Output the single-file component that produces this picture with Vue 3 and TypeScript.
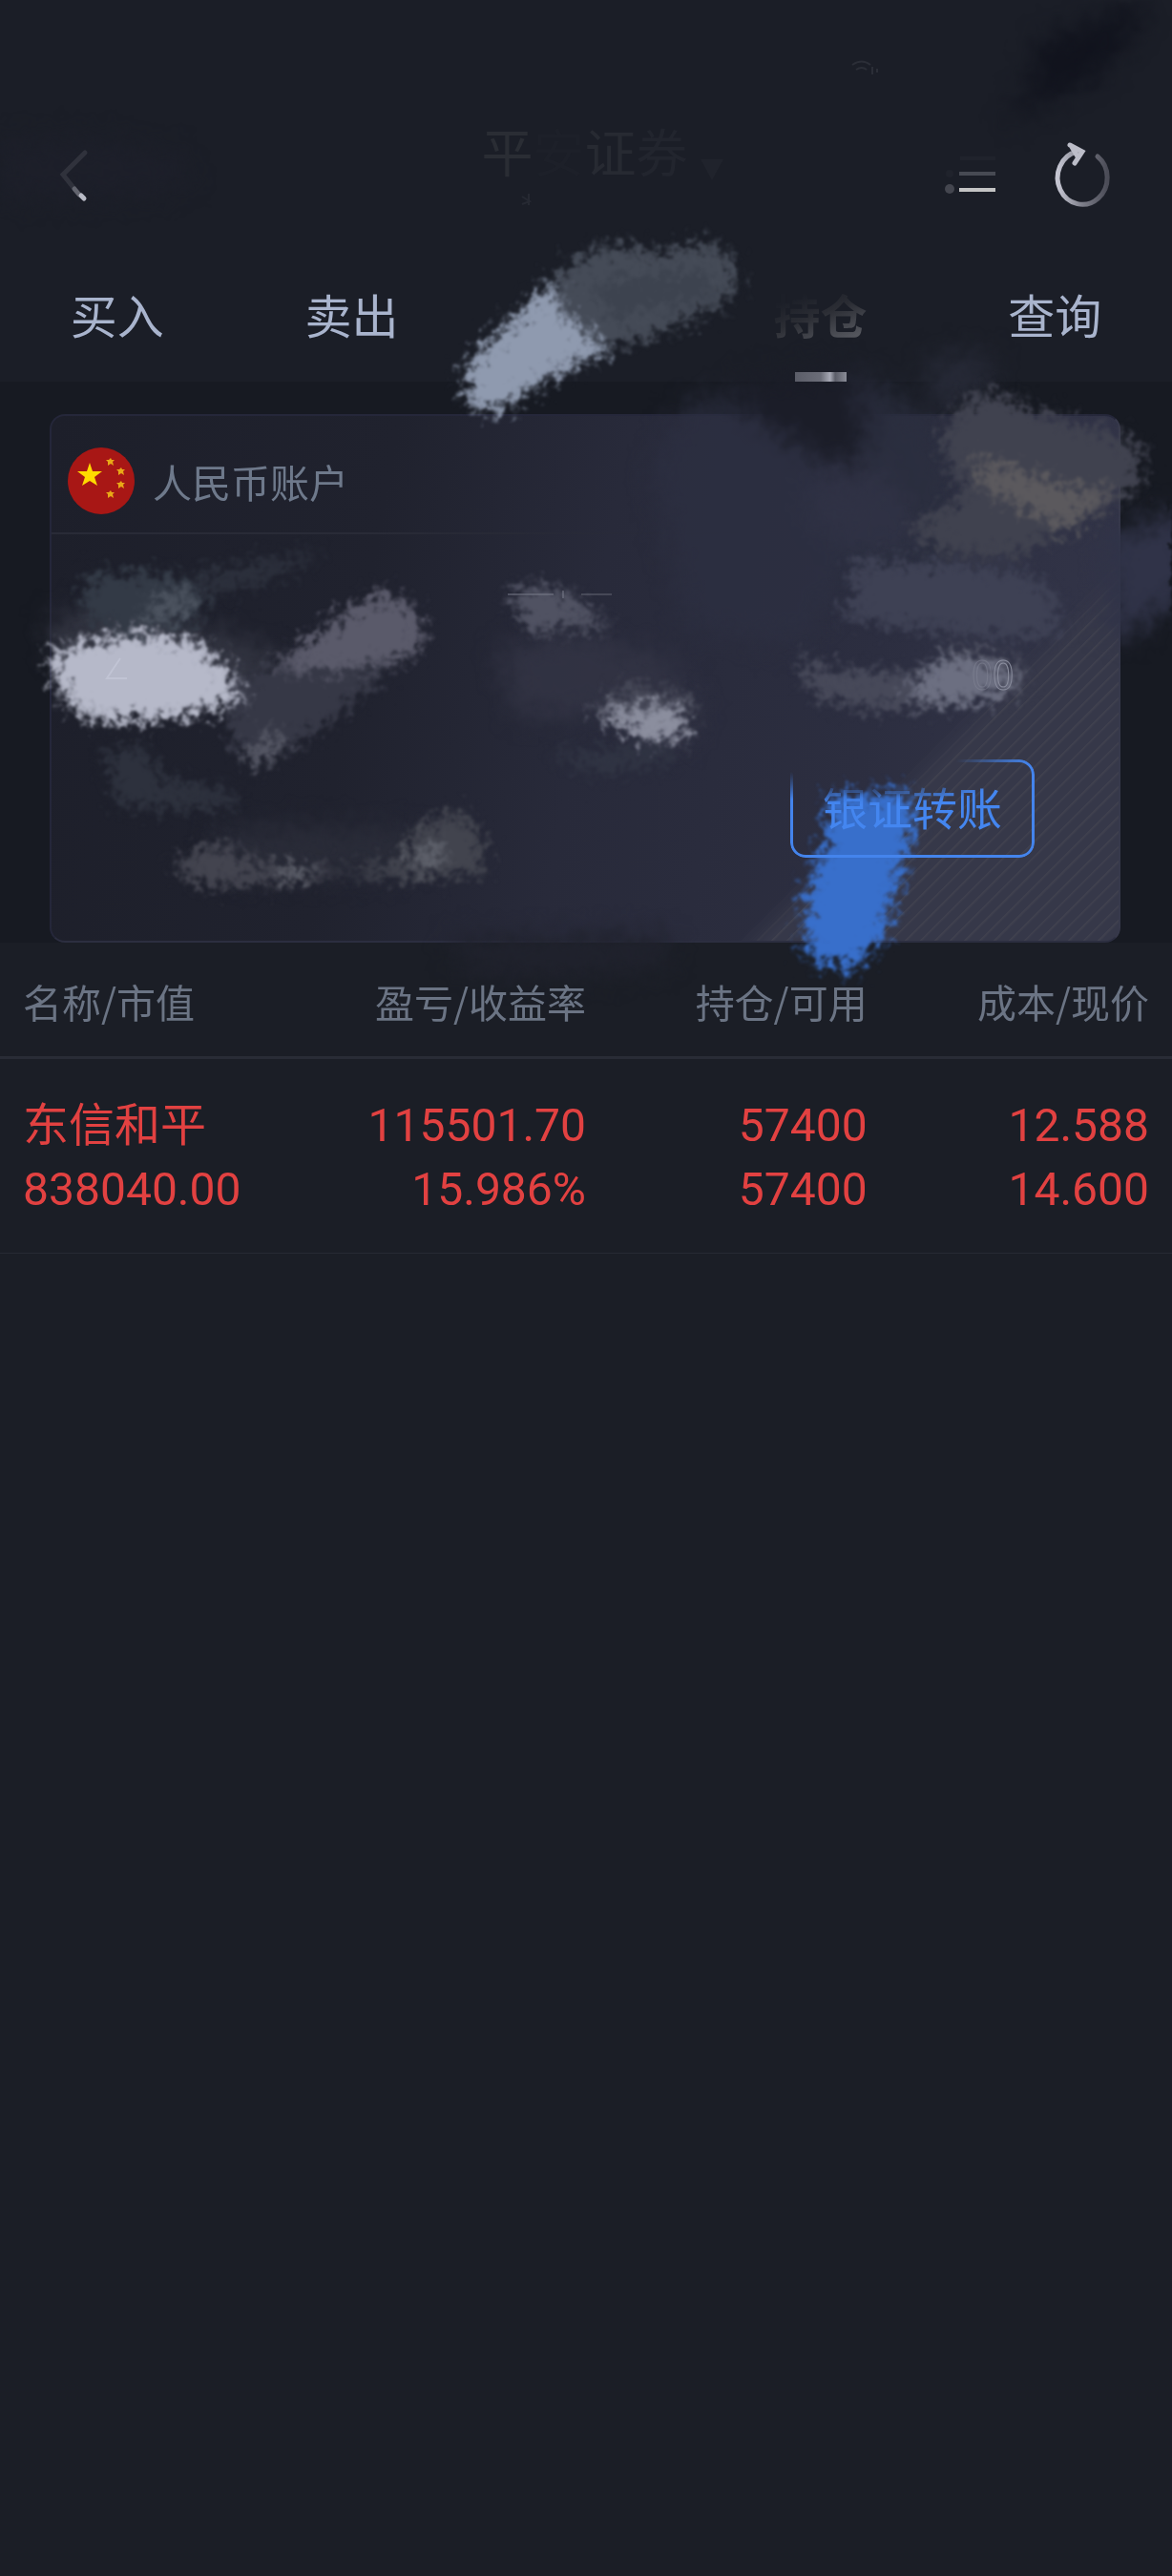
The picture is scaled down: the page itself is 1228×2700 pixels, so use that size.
<script setup lang="ts">
interface Smear {
  d: string
  fill: string
  opacity?: number
}

interface Holding {
  name: string
  value: string
  profit: string
  rate: string
  held: string
  available: string
  cost: string
  price: string
}

const columns: string[] = ['名称/市值', '盈亏/收益率', '持仓/可用', '成本/现价']

const holdings: Holding[] = [
  {
    name: '东信和平',
    value: '838040.00',
    profit: '115501.70',
    rate: '15.986%',
    held: '57400',
    available: '57400',
    cost: '12.588',
    price: '14.600',
  },
]

// wide, cloudy strokes
const softSmears: Smear[] = [
  { d: 'M1090 40L1130 30L1190 0L1200 20L1150 80L1100 105L1050 130L1080 90Z', fill: '#10121c', opacity: 0.9 },
  { d: 'M0 150L110 146L190 165L200 190L150 205L0 208Z', fill: '#1e202b', opacity: 0.6 },
  { d: 'M680 490L715 425L760 412L800 435L860 480L900 580L840 680L720 660Z', fill: '#2d3042', opacity: 0.65 },
  { d: 'M770 400L890 385L925 410L916 470L884 490L840 470L785 432Z', fill: '#1b1d28' },
  { d: 'M890 390L920 400L975 440L1000 500L1000 600L880 600L905 450Z', fill: '#2b2e3f', opacity: 0.8 },
  { d: 'M975 375L1040 372L1035 410L1010 420L985 440L970 410Z', fill: '#262936' },
  { d: 'M850 500L920 490L950 530L970 570L900 580L850 550Z', fill: '#33364a', opacity: 0.5 },
  { d: 'M1160 562L1250 530L1250 615L1180 668L1160 665Z', fill: '#303348' },
  { d: 'M520 680L600 660L700 690L735 740L720 780L640 750L540 750Z', fill: '#333545', opacity: 0.8 },
  { d: 'M470 985L700 980L700 1012L600 1022L490 1020Z', fill: '#20222d' },
  { d: 'M50 650L90 640L230 662L300 690L255 735L60 690Z', fill: '#343642', opacity: 0.9 },
  { d: 'M220 870L300 865L440 870L430 915L250 920Z', fill: '#2a2c38', opacity: 0.9 },
]

// dry-brush strokes with frayed edges
const roughSmears: Smear[] = [
  { d: 'M575 298L612 266L645 256L690 266L740 253L768 272L772 302L745 325L690 350L620 368Z', fill: '#454b57' },
  { d: 'M620 296L740 280L750 310L640 335Z', fill: '#3d434f' },
  { d: 'M486 385L530 340L578 295L594 332L640 366L600 384L570 400L520 434L490 424Z', fill: '#8f9aaf' },
  { d: 'M1000 430L1035 408L1080 428L1150 450L1195 464L1194 508L1130 552L1060 585L990 580L950 555L1010 520L985 465Z', fill: '#40424f' },
  { d: 'M1018 480L1060 491L1130 513L1172 512L1115 555L1088 540L1030 512Z', fill: '#5b595d' },
  { d: 'M890 588L1000 590L1070 598L1108 623L1110 664L1060 670L960 660L878 647L895 620Z', fill: '#3e4154' },
  { d: 'M838 685L870 702L960 706L1000 678L1066 688L1074 724L1000 741L900 743L845 724Z', fill: '#474959' },
  { d: 'M955 718L985 690L1030 692L1066 706L1054 728L1000 738L950 733Z', fill: '#6c6f81' },
  { d: 'M90 602L180 600L220 620L205 653L130 663L88 648Z', fill: '#333a46' },
  { d: 'M200 602L270 588L340 579L300 600L230 624Z', fill: '#2c303c' },
  { d: 'M152 638L175 620L208 622L188 648L146 650Z', fill: '#4c535f' },
  { d: 'M245 708L330 696L412 698L345 758L270 804L240 778Z', fill: '#363846' },
  { d: 'M282 702L350 650L395 620L430 632L446 665L432 688L370 702Z', fill: '#5a5a6a' },
  { d: 'M255 792L280 768L302 774L272 805Z', fill: '#565865' },
  { d: 'M56 682L100 670L140 664L205 671L236 698L256 732L200 751L112 757L78 746L56 712Z', fill: '#b6b9c9' },
  { d: 'M108 790L150 780L170 815L250 830L240 847L125 847Z', fill: '#2d313d' },
  { d: 'M180 908L228 880L264 902L330 910L372 914L300 925L210 929Z', fill: '#43444f' },
  { d: 'M360 914L420 900L436 866L484 850L506 878L504 916L420 922Z', fill: '#42444e' },
  { d: 'M290 910L318 905L330 917L300 922ZM425 902L455 884L470 893L440 910Z', fill: '#62656f' },
  { d: 'M575 790L695 782L706 800L620 812Z', fill: '#303443' },
  { d: 'M532 622L560 612L604 626L640 656L555 662Z', fill: '#505262' },
  { d: 'M628 738L660 716L725 730L720 776L680 760Z', fill: '#454756' },
  { d: 'M622 744L660 742L718 740L716 774L685 778L652 766Z', fill: '#8b8e9e' },
  { d: 'M868 836L954 830L956 875L940 930L924 986L892 1018L844 1002L844 940L866 880Z', fill: '#386fcb' },
]
</script>

<template>
  <div class="page">
    <header class="top">
      <div class="titlebar">
        <button class="icon back" type="button" aria-label="返回">
          <svg width="40" height="64" viewBox="0 0 40 64" fill="none" stroke-linecap="round" stroke-width="5">
            <path d="M29 8L6 31L18 46" stroke="#30323c" />
            <path d="M18 46L23 52" stroke="#62646e" />
            <path d="M25 53L28 56" stroke="#b9bbc6" />
          </svg>
        </button>
        <h1 class="title">
          <span class="t1">平</span><span class="t2">安</span><span class="t3">证</span><span class="t4">券</span>
          <svg class="caret" width="26" height="24" viewBox="0 0 26 24"><path d="M1 1H25L13 23Z" fill="#20232c" /></svg>
        </h1>
        <div class="actions">
          <button class="icon" type="button" aria-label="列表">
            <svg width="60" height="64" viewBox="0 0 60 64" fill="none" stroke-width="4">
              <path d="M19 14H56" stroke="#20232c" />
              <path d="M18 30H56" stroke="#474a53" />
              <path d="M18 47H56" stroke="#c4c4c4" />
              <circle cx="8" cy="30" r="4" fill="#20232c" />
              <circle cx="8" cy="46" r="5" fill="#44464f" />
            </svg>
          </button>
          <button class="icon" type="button" aria-label="刷新">
            <svg width="64" height="72" viewBox="0 0 64 72" fill="none" stroke-width="5" stroke-linecap="round">
              <defs>
                <linearGradient id="ring" x1="0" x2="1" y1="0" y2="0">
                  <stop offset="0" stop-color="#c5c6d2" />
                  <stop offset="0.5" stop-color="#7d7e89" />
                  <stop offset="1" stop-color="#4b4c57" />
                </linearGradient>
              </defs>
              <path d="M49 16A26 28 0 1 1 27 11" stroke="url(#ring)" />
              <path d="M20 4L33 11L25 23M22 6L28 16" stroke="#bcbdc8" />
            </svg>
          </button>
        </div>
      </div>
      <nav class="tabs">
        <a class="tab" href="#buy">买入</a>
        <a class="tab" href="#sell">卖出</a>
        <span class="tab"></span>
        <a class="tab active" href="#hold"><span>持仓</span></a>
        <a class="tab" href="#query">查询</a>
      </nav>
    </header>

    <section class="account">
      <div class="card">
        <div class="card-head">
          <svg class="flag" width="72" height="72" viewBox="0 0 72 72" aria-hidden="true">
            <circle cx="36" cy="36" r="35" fill="#a81715" />
            <path d="M24 17L27 26H37L29 32L32 41L24 36L16 41L19 32L11 26H21Z" fill="#ffda00" />
            <g fill="#e8a817">
              <path d="M46 12l1 2 3 0-2 2 1 4-3-2-3 2 0-4-2-2 3 0z" />
              <path d="M57 22l1 2 3 0-2 2 1 4-3-2-3 2 0-4-2-2 3 0z" />
              <path d="M57 36l1 2 3 0-2 2 1 4-3-2-3 2 0-4-2-2 3 0z" />
              <path d="M46 46l1 2 3 0-2 2 1 4-3-2-3 2 0-4-2-2 3 0z" />
            </g>
          </svg>
          <h2 class="account-name">人民币账户</h2>
        </div>
        <div class="card-body">
          <button class="transfer" type="button">银证转账</button>
        </div>
      </div>
    </section>

    <table class="holdings">
      <thead>
        <tr>
          <th v-for="c in columns" :key="c" scope="col">{{ c }}</th>
        </tr>
      </thead>
      <tbody>
        <tr v-for="h in holdings" :key="h.name">
          <td>{{ h.name }}<br />{{ h.value }}</td>
          <td>{{ h.profit }}<br />{{ h.rate }}</td>
          <td>{{ h.held }}<br />{{ h.available }}</td>
          <td>{{ h.cost }}<br />{{ h.price }}</td>
        </tr>
      </tbody>
    </table>

    <svg class="smears" viewBox="0 0 1228 1060" preserveAspectRatio="none" aria-hidden="true">
      <defs>
        <filter id="cloud" x="0" y="0" width="1228" height="1060" filterUnits="userSpaceOnUse" color-interpolation-filters="sRGB">
          <feGaussianBlur stdDeviation="13" result="b" />
          <feTurbulence type="fractalNoise" baseFrequency="0.07" numOctaves="3" seed="4" result="n" />
          <feDisplacementMap in="b" in2="n" scale="26" xChannelSelector="R" yChannelSelector="G" result="d" />
          <feGaussianBlur in="d" stdDeviation="1" />
        </filter>
        <filter id="brush" x="0" y="0" width="1228" height="1060" filterUnits="userSpaceOnUse" color-interpolation-filters="sRGB">
          <feGaussianBlur stdDeviation="6" result="b" />
          <feTurbulence type="fractalNoise" baseFrequency="0.11" numOctaves="3" seed="9" result="n" />
          <feDisplacementMap in="b" in2="n" scale="44" xChannelSelector="R" yChannelSelector="G" result="d" />
          <feGaussianBlur in="d" stdDeviation="1" />
        </filter>
      </defs>
      <g filter="url(#cloud)">
        <path v-for="(s, i) in softSmears" :key="i" :d="s.d" :fill="s.fill" :opacity="s.opacity ?? 1" />
      </g>
      <g filter="url(#brush)">
        <path v-for="(s, i) in roughSmears" :key="i" :d="s.d" :fill="s.fill" :opacity="s.opacity ?? 1" />
      </g>
      <g fill="none" stroke="#2b2e37" stroke-width="2">
        <path d="M893 68Q903 61 912 68M897 73Q903 69 908 73M914 70V78M919 72V76" />
        <path d="M547 206L555 211L547 214M554 203V215" opacity="0.7" />
      </g>
      <path d="M532 623H580M590 619V627" stroke="#7b7e8c" stroke-width="2" opacity="0.5" />
      <path d="M609 623H641" stroke="#5b5e6c" stroke-width="2" opacity="0.6" />
      <path d="M126 690L112 711H133" fill="none" stroke="#c6c9d8" stroke-width="2" opacity="0.7" />
      <text x="1018" y="722" class="ghost dim">0</text>
      <text x="1040" y="722" class="ghost">0</text>
    </svg>
  </div>
</template>

<style>
body {
  margin: 0;
  background: #1b1e26;
}
</style>

<style scoped>
.page {
  position: relative;
  min-height: 100vh;
  background: #1b1e26;
  color: #a9b4cd;
  font-family: "Noto Sans CJK SC", "Noto Sans", sans-serif;
}

.top {
  padding-top: 112px;
  background: #1b1e27;
}

.titlebar {
  display: grid;
  grid-template-columns: 1fr auto 1fr;
  align-items: center;
  height: 144px;
  padding: 0 63px 0 60px;
}

.icon {
  display: block;
  padding: 0;
  border: 0;
  background: none;
  position: relative;
  z-index: 2;
}

.icon svg {
  display: block;
}

.title {
  display: flex;
  align-items: center;
  margin: 0;
  padding-bottom: 52px;
  font-size: 54px;
  font-weight: 400;
  line-height: 56px;
}

.t1 { color: #2a2d34; }
.t2 { color: #1d2029; }
.t3 { color: #272a32; }
.t4 { color: #22252e; }

.caret {
  align-self: flex-end;
  margin: 0 -38px -4px 12px;
}

.actions {
  display: flex;
  justify-content: flex-end;
  align-items: center;
  gap: 54px;
}

.tabs {
  display: flex;
  height: 144px;
}

.tab {
  flex: 1;
  display: flex;
  flex-direction: column;
  align-items: center;
  position: relative;
  z-index: 2;
  padding-top: 40px;
  box-sizing: border-box;
  color: #a9b4cd;
  font-size: 49px;
  line-height: 66px;
  text-decoration: none;
}

.active {
  font-weight: 700;
}

.active span {
  background: linear-gradient(160deg, #1c1f28 25%, #2b2d34 50%, #54565d 85%);
  background-clip: text;
  color: transparent;
}

.active::after {
  content: "";
  width: 54px;
  height: 10px;
  margin-top: 28px;
  background: linear-gradient(90deg, #5b5d68, #6b6d78 50%, #a7a9b5 68%, #5b5d68 78%, #8a8c97);
}

.account {
  padding: 34px 54px 0 52px;
  background: #171a22;
}

.card {
  position: relative;
  box-sizing: border-box;
  height: 554px;
  border: 2px solid #25273a;
  border-right-color: #37394b;
  border-bottom-color: #2c2e40;
  border-radius: 16px;
  background: linear-gradient(100deg, #1d1f2a 0%, #20222e 30%, #282a3a 50%, #2c2e40 75%, #34364a 100%);
  overflow: hidden;
}

.card::after {
  content: "";
  position: absolute;
  inset: 150px 0 0 auto;
  width: 400px;
  background:
    repeating-linear-gradient(135deg, #3f404e 0 1px, transparent 3px 11px),
    #363849;
  -webkit-mask-image: linear-gradient(135deg, transparent 50%, #000 54%);
  mask-image: linear-gradient(135deg, transparent 50%, #000 54%);
}

.card-head {
  display: flex;
  align-items: center;
  gap: 18px;
  height: 124px;
  padding: 14px 16px 0;
  box-sizing: border-box;
  border-bottom: 2px solid transparent;
  border-image: linear-gradient(90deg, #292b37, #292b37 30%, transparent 65%) 1;
}

.account-name {
  position: relative;
  z-index: 2;
  margin: 0;
  color: #6e798b;
  font-size: 41px;
  font-weight: 400;
  line-height: 56px;
}

.card-body {
  display: flex;
  justify-content: flex-end;
  padding: 236px 88px 0 0;
}

.transfer {
  position: relative;
  z-index: 2;
  width: 256px;
  height: 103px;
  padding: 0 0 6px;
  border: 3px solid #4484ec;
  border-radius: 16px;
  background: none;
  color: #4486f0;
  font-family: inherit;
  font-size: 47px;
  line-height: 60px;
  -webkit-mask-image: radial-gradient(ellipse 60% 42% at 32% 0, transparent 60%, #000 110%);
  mask-image: radial-gradient(ellipse 60% 42% at 32% 0, transparent 60%, #000 110%);
}

.holdings {
  position: relative;
  z-index: 2;
  width: 100%;
  border-collapse: collapse;
  table-layout: fixed;
}

.holdings th,
.holdings td {
  box-sizing: border-box;
  text-align: right;
  white-space: nowrap;
}

.holdings th {
  height: 120px;
  padding: 4px 0 0 24px;
  border-bottom: 3px solid #292c36;
  color: #6b7484;
  font-size: 41px;
  font-weight: 400;
  line-height: 56px;
}

.holdings th:nth-child(1) { width: 24%; }
.holdings th:nth-child(2) { width: 26%; }
.holdings th:nth-child(3) { width: 24%; }
.holdings th:nth-child(4) { width: 26%; }

.holdings td {
  padding: 36px 0 33px 24px;
  border-bottom: 1px solid #272a33;
  color: #e24141;
  font-family: Roboto, "Noto Sans CJK SC", sans-serif;
  font-size: 48px;
  line-height: 67px;
}

.holdings th:first-child,
.holdings td:first-child {
  text-align: left;
}

.holdings th:last-child,
.holdings td:last-child {
  padding-right: 24px;
}

.smears {
  position: absolute;
  z-index: 1;
  top: 0;
  left: 0;
  width: 100%;
  height: 1060px;
  pointer-events: none;
}

.ghost {
  fill: none;
  stroke: #8a8d9d;
  stroke-width: 1px;
  font-size: 40px;
}

.dim {
  opacity: 0.4;
}
</style>
